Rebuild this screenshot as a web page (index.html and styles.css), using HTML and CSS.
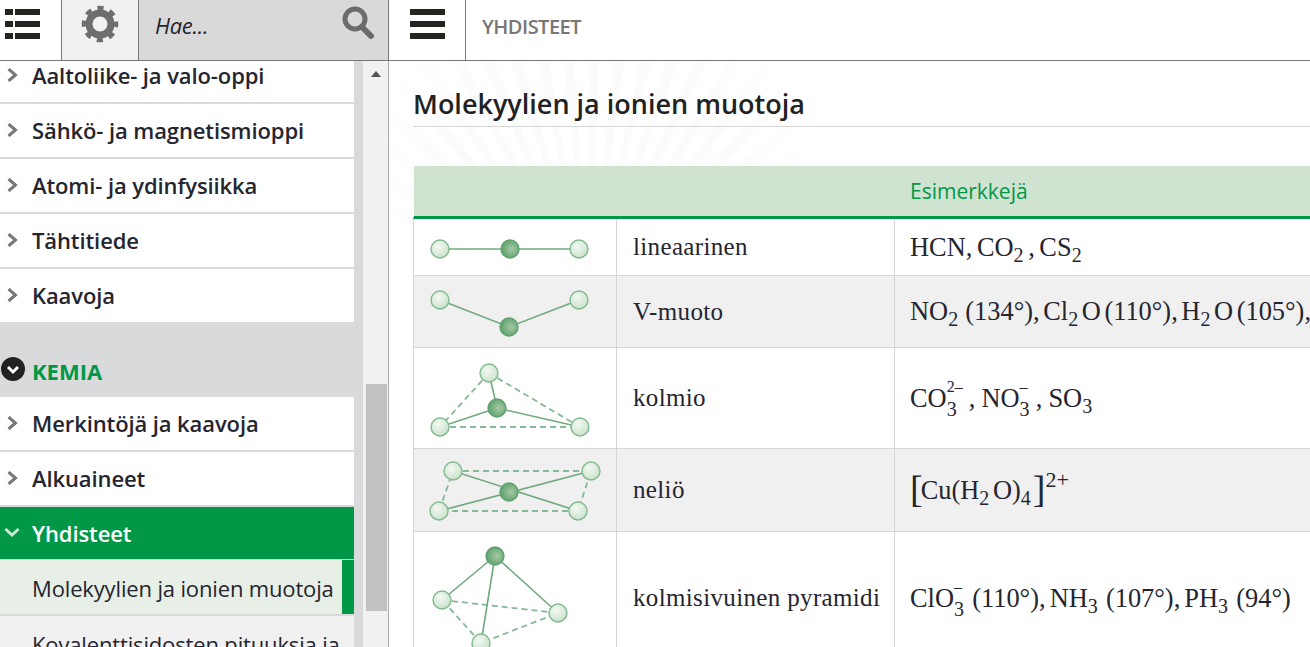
FILE: index.html
```html
<!DOCTYPE html>
<html lang="fi">

<head>
  <meta charset="UTF-8" />
  <meta name="viewport" content="width=device-width, initial-scale=1.0" />
  <title>Yhdisteet</title>
  <link rel="stylesheet" href="styles.css">
</head>

<body>
  <svg class="defs" width="0" height="0">
    <defs>
      <radialGradient id="atomLight" cx="0.4" cy="0.35" r="0.75">
        <stop offset="0" stop-color="#f4f9f3" />
        <stop offset="1" stop-color="#c5dfc5" />
      </radialGradient>
      <radialGradient id="atomDark" cx="0.6" cy="0.5" r="0.7">
        <stop offset="0" stop-color="#a5c8a5" />
        <stop offset="1" stop-color="#4f9a5f" />
      </radialGradient>
    </defs>
  </svg>

  <aside class="left-pane">
    <header class="left-bar">
      <div class="bar-btn list-btn">
        <svg width="61" height="60" viewBox="0 0 61 60">
          <path class="ink" d="M5 9h8v6H5zM15 9h25v6H15zM5 21h8v6H5zM15 21h25v6H15zM5 33h8v6H5zM15 33h25v6H15z" />
        </svg>
      </div>
      <div class="bar-btn gear-btn">
        <svg width="76" height="60" viewBox="0 0 76 60">
          <circle cx="38" cy="24" r="11" fill="none" stroke="#6e6e6e" stroke-width="7" />
          <circle cx="38" cy="24" r="16" fill="none" stroke="#6e6e6e" stroke-width="4.5" stroke-dasharray="6.2 6.37" stroke-dashoffset="3.1" />
        </svg>
      </div>
      <div class="search">
        <span class="search-text">Hae...</span>
        <svg class="search-icon" width="34" height="40" viewBox="0 0 34 40">
          <circle cx="14" cy="16" r="10" fill="none" stroke="#6b6b6b" stroke-width="5" />
          <path d="M21 24l9 9" stroke="#6b6b6b" stroke-width="6" stroke-linecap="round" />
        </svg>
      </div>
    </header>

    <div class="side-body">
      <nav class="menu">
        <ul class="menu-list scrolled">
          <li class="menu-item"><svg class="chev" width="12" height="14" viewBox="0 0 12 14"><path d="M1.5 1l7 6-7 6" /></svg>Aaltoliike- ja valo-oppi</li>
          <li class="menu-item"><svg class="chev" width="12" height="14" viewBox="0 0 12 14"><path d="M1.5 1l7 6-7 6" /></svg>Sähkö- ja magnetismioppi</li>
          <li class="menu-item"><svg class="chev" width="12" height="14" viewBox="0 0 12 14"><path d="M1.5 1l7 6-7 6" /></svg>Atomi- ja ydinfysiikka</li>
          <li class="menu-item"><svg class="chev" width="12" height="14" viewBox="0 0 12 14"><path d="M1.5 1l7 6-7 6" /></svg>Tähtitiede</li>
          <li class="menu-item"><svg class="chev" width="12" height="14" viewBox="0 0 12 14"><path d="M1.5 1l7 6-7 6" /></svg>Kaavoja</li>
        </ul>
        <h3 class="menu-group">
          <svg width="24" height="24" viewBox="0 0 24 24">
            <circle cx="12" cy="12" r="12" fill="#222" />
            <path d="M7 10l5 5 5-5" fill="none" stroke="#fff" stroke-width="3" />
          </svg>
          KEMIA
        </h3>
        <ul class="menu-list">
          <li class="menu-item"><svg class="chev" width="12" height="14" viewBox="0 0 12 14"><path d="M1.5 1l7 6-7 6" /></svg>Merkintöjä ja kaavoja</li>
          <li class="menu-item"><svg class="chev" width="12" height="14" viewBox="0 0 12 14"><path d="M1.5 1l7 6-7 6" /></svg>Alkuaineet</li>
          <li class="menu-item open"><svg class="chev" width="16" height="14" viewBox="0 0 16 14"><path d="M1.5 3l6.5 6 6.5-6" /></svg>Yhdisteet</li>
          <li class="sub-item current">Molekyylien ja ionien muotoja</li>
          <li class="sub-item">Kovalenttisidosten pituuksia ja</li>
        </ul>
      </nav>
      <div class="scrollbar">
        <span class="scroll-up"></span>
        <span class="scroll-thumb"></span>
      </div>
    </div>
  </aside>

  <main class="right-pane">
    <header class="top-bar">
      <div class="menu-btn">
        <svg width="76" height="60" viewBox="0 0 76 60">
          <path class="ink" d="M21 9h35v6H21zM21 21h35v6H21zM21 33h35v6H21z" />
        </svg>
      </div>
      <span class="crumb">YHDISTEET</span>
    </header>

    <section class="content">
      <h1 class="page-title">Molekyylien ja ionien muotoja</h1>

      <table class="shapes">
        <colgroup>
          <col class="col-pic">
          <col class="col-name">
          <col class="col-ex">
        </colgroup>
        <thead>
          <tr>
            <th></th>
            <th></th>
            <th>Esimerkkejä</th>
          </tr>
        </thead>
        <tbody>
          <tr class="row-1">
            <td class="pic">
              <svg width="202" height="56">
                <g class="bond"><path d="M26 30H165" /></g>
                <circle class="atom" fill="url(#atomLight)" cx="26" cy="30" r="9" />
                <circle class="atom dark" fill="url(#atomDark)" cx="96" cy="30" r="9" />
                <circle class="atom" fill="url(#atomLight)" cx="165" cy="30" r="9" />
              </svg>
            </td>
            <td class="name">lineaarinen</td>
            <td class="ex">HCN, CO<sub>2</sub> , CS<sub>2</sub></td>
          </tr>
          <tr class="row-2">
            <td class="pic">
              <svg width="202" height="71">
                <g class="bond"><path d="M26 24L95 51L165 24" /></g>
                <circle class="atom" fill="url(#atomLight)" cx="26" cy="24" r="9" />
                <circle class="atom dark" fill="url(#atomDark)" cx="95" cy="51" r="9" />
                <circle class="atom" fill="url(#atomLight)" cx="165" cy="24" r="9" />
              </svg>
            </td>
            <td class="name">V-muoto</td>
            <td class="ex">NO<sub>2</sub> &nbsp;(134°), Cl<sub>2</sub> O (110°), H<sub>2</sub> O (105°),</td>
          </tr>
          <tr class="row-3">
            <td class="pic">
              <svg width="202" height="100">
                <g class="bond dash"><path d="M75 25L26 79M75 25L166 79M26 79H166" /></g>
                <g class="bond"><path d="M75 25L83 60M26 79L83 60L166 79" /></g>
                <circle class="atom" fill="url(#atomLight)" cx="75" cy="25" r="9" />
                <circle class="atom dark" fill="url(#atomDark)" cx="83" cy="60" r="9" />
                <circle class="atom" fill="url(#atomLight)" cx="26" cy="79" r="9" />
                <circle class="atom" fill="url(#atomLight)" cx="166" cy="79" r="9" />
              </svg>
            </td>
            <td class="name">kolmio</td>
            <td class="ex">CO<span class="stack"><i>2–</i><b>3</b></span> , NO<span class="stack"><i>–</i><b>3</b></span> , SO<sub>3</sub></td>
          </tr>
          <tr class="row-4">
            <td class="pic">
              <svg width="202" height="82">
                <g class="bond dash"><path d="M39 22H177L164 62H25Z" /></g>
                <g class="bond"><path d="M39 22L164 62M25 62L177 22" /></g>
                <circle class="atom" fill="url(#atomLight)" cx="39" cy="22" r="9" />
                <circle class="atom" fill="url(#atomLight)" cx="177" cy="22" r="9" />
                <circle class="atom dark" fill="url(#atomDark)" cx="95" cy="43" r="9" />
                <circle class="atom" fill="url(#atomLight)" cx="25" cy="62" r="9" />
                <circle class="atom" fill="url(#atomLight)" cx="164" cy="62" r="9" />
              </svg>
            </td>
            <td class="name">neliö</td>
            <td class="ex"><span class="bracket open-br">[</span>Cu(H<sub>2</sub> O)<sub>4</sub><span class="bracket close-br">]</span><sup>2+</sup></td>
          </tr>
          <tr class="row-5">
            <td class="pic">
              <svg width="202" height="131">
                <g class="bond dash"><path d="M28 68L144 81L67 111Z" /></g>
                <g class="bond"><path d="M81 24L28 68M81 24L144 81M81 24L67 111" /></g>
                <circle class="atom" fill="url(#atomLight)" cx="28" cy="68" r="9" />
                <circle class="atom" fill="url(#atomLight)" cx="144" cy="81" r="9" />
                <circle class="atom" fill="url(#atomLight)" cx="67" cy="111" r="9" />
                <circle class="atom dark" fill="url(#atomDark)" cx="81" cy="24" r="9" />
              </svg>
            </td>
            <td class="name">kolmisivuinen pyramidi</td>
            <td class="ex">ClO<span class="stack"><i>–</i><b>3</b></span> &nbsp;(110°), NH<sub>3</sub> &nbsp;(107°), PH<sub>3</sub> &nbsp;(94°)</td>
          </tr>
        </tbody>
      </table>
    </section>
  </main>
</body>

</html>
```

FILE: styles.css
```css
:root {
  --green: #009846;
  --line: #777;
  --cell-line: #d6d6d6;
  --side-bg: #d9dadc;
  --ink: #25252f;
}

* {
  box-sizing: border-box;
}

html,
body {
  margin: 0;
  padding: 0;
  height: 100%;
  overflow: hidden;
  background: #fff;
  color: var(--ink);
  font-family: "Open Sans", sans-serif;
}

body {
  display: flex;
}

.defs {
  position: absolute;
}

.ink {
  fill: #25251f;
}

/* left pane */
.left-pane {
  display: flex;
  flex-direction: column;
  flex: 0 0 389px;
  height: 100%;
  border-right: 1px solid #aaa;
}

.left-bar {
  display: flex;
  flex: 0 0 61px;
  margin-right: -1px;
  border-bottom: 1px solid var(--line);
}

.bar-btn {
  border-right: 1px solid var(--line);
}

.bar-btn svg {
  display: block;
}

.list-btn {
  flex: 0 0 62px;
}

.gear-btn {
  flex: 0 0 77px;
  background: #f0f0f0;
}

.search {
  display: flex;
  flex: 1;
  justify-content: space-between;
  padding: 0 13px 0 16px;
  border-right: 1px solid var(--line);
  background: #d9d9d9;
}

.search-text {
  font-size: 22px;
  font-style: italic;
  line-height: 51px;
  letter-spacing: -0.3px;
}

.search-icon {
  margin-top: 3px;
}

.side-body {
  display: flex;
  flex: 1;
  min-height: 0;
}

.menu {
  flex: 0 0 363px;
  overflow: hidden;
  background: var(--side-bg);
}

.menu-list {
  margin: 0;
  padding: 0;
  list-style: none;
}

.menu-list.scrolled {
  margin-top: -12px;
}

.menu-item,
.sub-item {
  display: flex;
  align-items: center;
  width: 354px;
  height: 53px;
  margin-bottom: 2px;
  font-size: 22px;
  white-space: nowrap;
}

.menu-item {
  padding-bottom: 2px;
  padding-left: 7px;
  background: #fff;
  font-weight: 600;
  letter-spacing: -0.1px;
}

.chev {
  flex: none;
  margin-right: 13px;
}

.chev path {
  fill: none;
  stroke: #777;
  stroke-width: 3;
}

.menu-item.open {
  height: 52px;
  margin-bottom: 1px;
  padding-bottom: 0;
  padding-left: 4px;
  background: var(--green);
  color: #fff;
}

.menu-item.open .chev {
  margin-right: 12px;
}

.menu-item.open .chev path {
  stroke: #cfe6d6;
}

.menu-group {
  display: flex;
  align-items: center;
  gap: 7px;
  height: 73px;
  margin: 0;
  padding: 21px 0 0 1px;
  color: var(--green);
  font-size: 22px;
  font-weight: 700;
}

.menu-group svg {
  margin-top: -4px;
}

.sub-item {
  height: 54px;
  padding-top: 2px;
  padding-left: 32px;
  background: #f1f1f1;
  letter-spacing: -0.15px;
}

.sub-item.current {
  background: #e7efe7;
  border-right: 12px solid var(--green);
}

.scrollbar {
  position: relative;
  flex: 1;
  background: #f1f1f1;
}

.scroll-up {
  position: absolute;
  top: 10px;
  left: 8px;
  border: 5.5px solid transparent;
  border-top: 0;
  border-bottom: 6px solid #505050;
}

.scroll-thumb {
  position: absolute;
  top: 323px;
  left: 3px;
  width: 21px;
  height: 227px;
  background: #c1c1c1;
}

/* right pane */
.right-pane {
  display: flex;
  flex-direction: column;
  flex: 1;
  min-width: 0;
  height: 100%;
}

.top-bar {
  display: flex;
  flex: 0 0 61px;
  border-bottom: 1px solid var(--line);
}

.menu-btn {
  flex: 0 0 77px;
  border-right: 1px solid var(--line);
}

.menu-btn svg {
  display: block;
}

.crumb {
  padding-left: 16px;
  color: #777;
  font-size: 20px;
  font-weight: 600;
  line-height: 53px;
  letter-spacing: -0.5px;
}

.content {
  position: relative;
  flex: 1;
  min-height: 0;
  overflow: hidden;
  padding: 24px 0 0 24px;
}

.content::before {
  content: "";
  position: absolute;
  top: 0;
  left: 0;
  width: 430px;
  height: 170px;
  background: repeating-conic-gradient(from 270deg at 200px 240px, #fafbfa 0 2.5deg, #fff 2.5deg 6deg);
  -webkit-mask-image: radial-gradient(ellipse 220px 170px at 200px 90px, #000 60%, transparent 100%);
  mask-image: radial-gradient(ellipse 220px 170px at 200px 90px, #000 60%, transparent 100%);
}

.page-title {
  position: relative;
  height: 42px;
  margin: 0 0 39px;
  border-bottom: 1px solid var(--cell-line);
  color: #222;
  font-size: 27px;
  font-weight: 600;
  line-height: 38px;
}

.shapes {
  position: relative;
  width: 1000px;
  border-collapse: separate;
  border-spacing: 0;
  table-layout: fixed;
  background: #fff;
}

.col-pic {
  width: 204px;
}

.col-name {
  width: 278px;
}

.shapes th {
  height: 53px;
  padding: 0 0 0 15px;
  border-bottom: 3px solid var(--green);
  background: #d0e2d0;
  background-clip: padding-box;
  color: var(--green);
  font-size: 21px;
  font-weight: 400;
  text-align: left;
}

.shapes th:first-child {
  border-left: 1px solid #fff;
}

.shapes td {
  padding: 0;
  border-bottom: 1px solid var(--cell-line);
  border-right: 1px solid var(--cell-line);
}

.shapes tbody tr:nth-child(even) td {
  background: #f0f0f0;
}

.shapes td.pic {
  border-left: 1px solid var(--cell-line);
  vertical-align: top;
}

.pic svg {
  display: block;
}

.row-1 {
  height: 57px;
}

.row-2 {
  height: 72px;
}

.row-3 {
  height: 101px;
}

.row-4 {
  height: 83px;
}

.row-5 {
  height: 132px;
}

.shapes td.name {
  padding-left: 16px;
  font-family: "Liberation Serif", serif;
  font-size: 25px;
  letter-spacing: 0.35px;
}

.shapes td.ex {
  padding-left: 15px;
  border-right: 0;
  font-family: "Liberation Serif", serif;
  font-size: 26.4px;
  word-spacing: -3px;
  white-space: nowrap;
}

.shapes .row-1 td.ex {
  word-spacing: -2px;
}

.shapes .row-3 td.ex {
  word-spacing: -0.5px;
}

.shapes .row-5 td.ex {
  word-spacing: -2.5px;
}

.ex sub,
.ex sup {
  line-height: 0;
}

.ex sub {
  font-size: 20px;
  vertical-align: -6px;
}

.ex sup {
  font-size: 22px;
  vertical-align: 12px;
}

.stack {
  display: inline-flex;
  flex-direction: column;
  vertical-align: 15px;
  line-height: 22px;
}

.stack i {
  font-size: 16px;
  font-style: normal;
}

.stack b {
  font-size: 20px;
  font-weight: 400;
}

.bracket {
  font-size: 38px;
  font-weight: 400;
  line-height: 0;
  vertical-align: -3px;
}

.open-br {
  margin-right: -2px;
}

.close-br {
  margin-left: 2px;
}

/* molecule pictures */
.bond path {
  fill: none;
  stroke: #70a97d;
  stroke-width: 1.6;
}

.bond.dash path {
  stroke: #86b995;
  stroke-width: 1.8;
  stroke-dasharray: 6 4;
}

.atom {
  stroke: #82b98e;
  stroke-width: 1.4;
}

.atom.dark {
  stroke: #5ea26f;
}
```
